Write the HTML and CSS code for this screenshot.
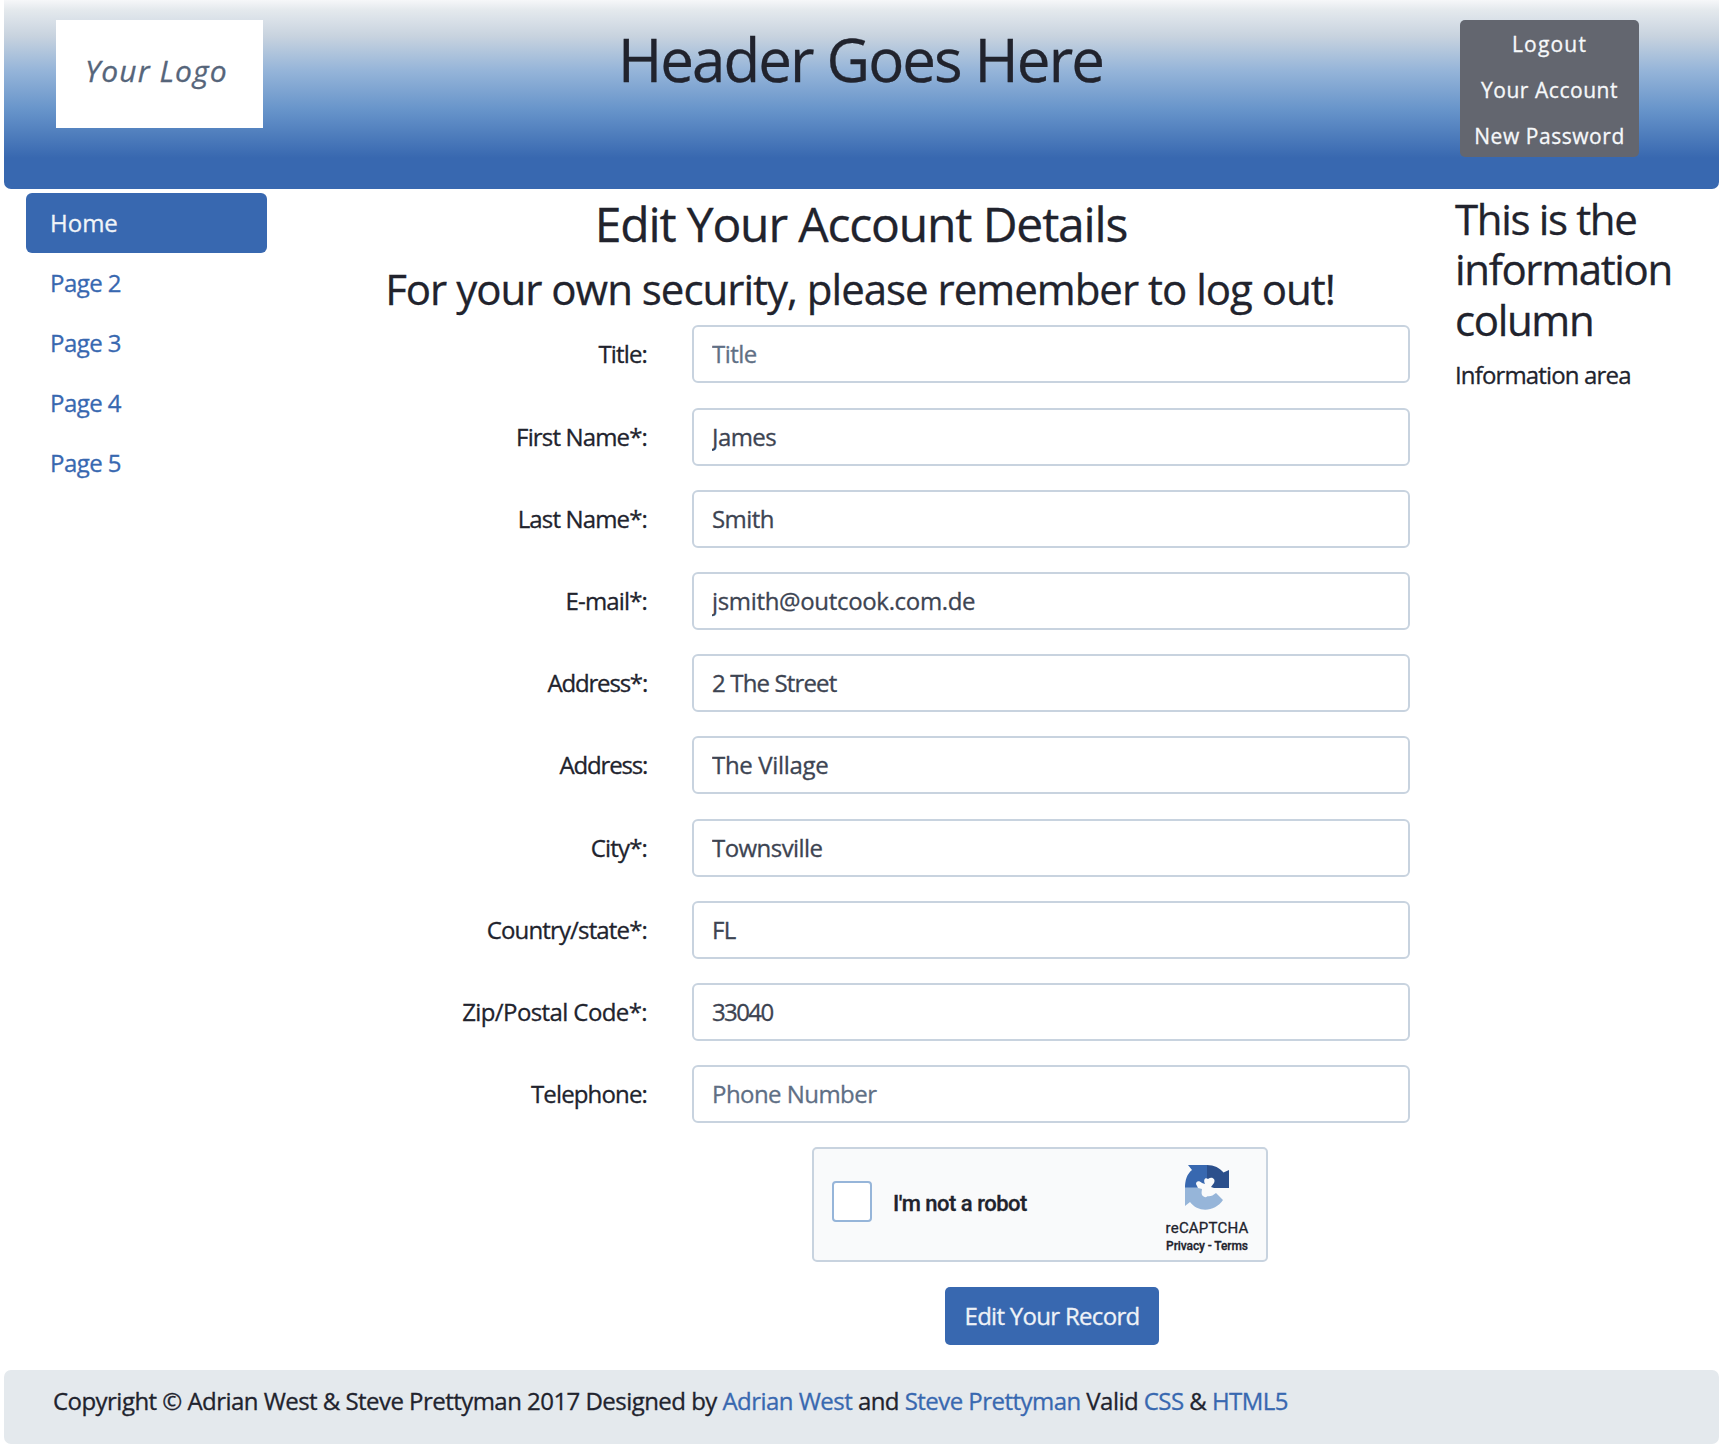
FILE: index.html
```html
<!DOCTYPE html>
<html lang="en">
<head>
<meta charset="utf-8">
<title>Edit Your Account Details</title>
<link rel="stylesheet" href="styles.css">
</head>
<body>
<div class="page">
  <header class="banner">
    <div class="logo">Your Logo</div>
    <h1>Header Goes Here</h1>
    <nav class="account-menu">
      <a class="t-logout">Logout</a>
      <a>Your Account</a>
      <a>New Password</a>
    </nav>
  </header>
  <div class="columns">
    <nav class="side-nav">
      <a class="active">Home</a>
      <a>Page 2</a>
      <a>Page 3</a>
      <a>Page 4</a>
      <a>Page 5</a>
    </nav>
    <main>
      <h2>Edit Your Account Details</h2>
      <h3>For your own security, please remember to log out!</h3>
      <form>
        <div class="row"><label for="title">Title:</label><input id="title" placeholder="Title"></div>
        <div class="row"><label for="first">First Name*:</label><input id="first" value="James"></div>
        <div class="row"><label for="last">Last Name*:</label><input id="last" value="Smith"></div>
        <div class="row"><label for="email">E-mail*:</label><input id="email" class="wide" value="jsmith@outcook.com.de"></div>
        <div class="row"><label for="addr1" class="tight">Address*:</label><input id="addr1" class="narrow" value="2 The Street"></div>
        <div class="row"><label for="addr2" class="tight">Address:</label><input id="addr2" class="wide" value="The Village"></div>
        <div class="row"><label for="city">City*:</label><input id="city" value="Townsville"></div>
        <div class="row"><label for="state">Country/state*:</label><input id="state" value="FL"></div>
        <div class="row"><label for="zip" class="loose">Zip/Postal Code*:</label><input id="zip" class="digits" value="33040"></div>
        <div class="row"><label for="phone">Telephone:</label><input id="phone" placeholder="Phone Number"></div>
        <div class="captcha">
          <span class="box"></span>
          <span class="robot">I'm not a robot</span>
          <div class="brand">
            <svg width="46" height="48" viewBox="0 0 46 48">
              <path fill="#3868b0" d="M4 1H23V24H1C1 16 3 10 8 6Z"/>
              <path fill="#2b4f8c" d="M23 1C30 1 36 4 39.5 8.500L45 6V24H23Z"/>
              <path fill="#96b5d9" d="M1 23.500H23V32C26 33 29 31.500 32 29L39 36C31 48 14 49 6 38L1 42Z"/>
              <path fill="#f9fafb" d="M12 20C12 17 15 16 18 19L21 20C19 16 21 13 24 15C28 12 32 15 30 19L27 23L30 24C32 28 29 30 25 28C25 33 21 35 18 31C17 29 18 26 18 25L14 24Z"/>
            </svg>
            <span class="name">reCAPTCHA</span>
            <span class="terms">Privacy - Terms</span>
          </div>
        </div>
        <button type="button">Edit Your Record</button>
      </form>
    </main>
    <aside>
      <h3>This is the information column</h3>
      <p>Information area</p>
    </aside>
  </div>
  <footer>Copyright © Adrian West &amp; Steve Prettyman 2017 Designed by <a>Adrian West</a> and <a>Steve Prettyman</a> Valid <a>CSS</a> &amp; <a>HTML5</a></footer>
</div>
</body>
</html>
```
FILE: styles.css
```css
* { box-sizing: border-box; }
body {
  margin: 0;
  background: #fff;
  color: #21232d;
  font: 24px/36px "Open Sans", "Noto Sans", sans-serif;
  letter-spacing: -0.6px;
  -webkit-text-stroke: 0.3px currentColor;
}
h1, h2, h3, p { margin: 0; font-weight: 400; }
.page { width: 1715px; margin-left: 4px; }

.banner {
  display: grid;
  grid-template-columns: 207px 1fr 179px;
  align-items: start;
  height: 188.5px;
  padding: 20px 80px 0 52px;
  border-radius: 0 0 7px 7px;
  background: linear-gradient(#f6f7f9 0, #e4e9ed 10px, #c8d3df 36px, #96b5d9 70px, #6794ca 110px, #3868b0 158px);
}
.logo {
  height: 108px;
  padding-left: 29px;
  background: #fff;
  color: #56657a;
  font-size: 30px;
  font-style: italic;
  line-height: 101px;
  letter-spacing: 1.1px;
}
h1 {
  font-size: 60px;
  line-height: 78px;
  letter-spacing: -1.9px;
  text-align: center;
  padding-right: 2px;
}
.account-menu {
  display: flex;
  flex-direction: column;
  height: 137px;
  padding-top: 1px;
  border-radius: 5px;
  background: #63666f;
  color: #f6f8fa;
  font-size: 21px;
  line-height: 46px;
  letter-spacing: 0.55px;
  text-align: center;
}
.t-logout { letter-spacing: 1.2px; }

.columns {
  display: grid;
  grid-template-columns: 241px 1148px 1fr;
  column-gap: 20px;
  height: 1181.5px;
  padding: 4.5px 0 0 22px;
}
.side-nav a {
  display: block;
  height: 60px;
  padding-left: 24px;
  line-height: 59px;
  color: #3868b0;
  letter-spacing: -0.55px;
}
.side-nav .active {
  border-radius: 6px;
  background: #3868b0;
  color: #f0f4f8;
  letter-spacing: 0;
}
h2 {
  font-size: 48px;
  line-height: 61px;
  letter-spacing: -1.15px;
  text-align: center;
  margin-bottom: 9.5px;
}
h3 { font-size: 42px; line-height: 50.4px; letter-spacing: -1.35px; }
main h3 { text-align: center; letter-spacing: -1px; margin-bottom: 11.5px; padding-right: 2px; }
aside h3 { width: 230px; padding-top: 1px; margin-bottom: 12px; }
aside p { letter-spacing: -0.85px; }

form { display: flex; flex-direction: column; }
.row {
  display: grid;
  grid-template-columns: 360px 718px;
  column-gap: 45px;
  margin-bottom: 24.2px;
}
label { text-align: right; line-height: 57px; letter-spacing: -0.85px; }
.tight { letter-spacing: -1.2px; }
.loose { letter-spacing: -0.6px; }
input {
  height: 58px;
  padding: 0 18px 1px;
  border: 2px solid #c8d3df;
  border-radius: 6px;
  background: #fff;
  color: #3d4452;
  font: inherit;
  letter-spacing: -0.55px;
}
.wide { letter-spacing: -0.33px; }
.narrow { letter-spacing: -0.85px; }
.digits { letter-spacing: -1.6px; }
input::placeholder { color: #5f6f85; opacity: 1; }

.captcha {
  display: flex;
  width: 456px;
  height: 115px;
  margin: 0 0 25px 525px;
  border: 2px solid #c8d3df;
  border-radius: 5px;
  background: #f9fafb;
}
.box {
  width: 40px;
  height: 41px;
  margin: 32px 21px 0 18px;
  border: 2px solid #96b5d9;
  border-radius: 4px;
  background: #fff;
}
.robot {
  width: 271px;
  font: 500 22px/36px Roboto, sans-serif;
  letter-spacing: -0.5px;
  margin-top: 37px;
}
.brand {
  display: flex;
  flex-direction: column;
  align-items: center;
  width: 86px;
  padding-top: 15px;
  font-family: Roboto, sans-serif;
  white-space: nowrap;
}
.name { font-size: 15px; line-height: 20px; letter-spacing: 0.2px; margin-top: 6px; }
.terms { font-size: 12px; font-weight: 500; line-height: 16px; letter-spacing: -0.1px; }

button {
  width: 214px;
  height: 58px;
  margin-left: 658px;
  padding: 0;
  border: 0;
  border-radius: 5px;
  background: #3868b0;
  color: #eef2f7;
  font: inherit;
  letter-spacing: -0.7px;
}

footer {
  height: 74px;
  padding-left: 49px;
  border-radius: 7px;
  background: #e4e9ed;
  line-height: 62px;
  letter-spacing: -0.54px;
}
footer a { color: #3868b0; }
```
